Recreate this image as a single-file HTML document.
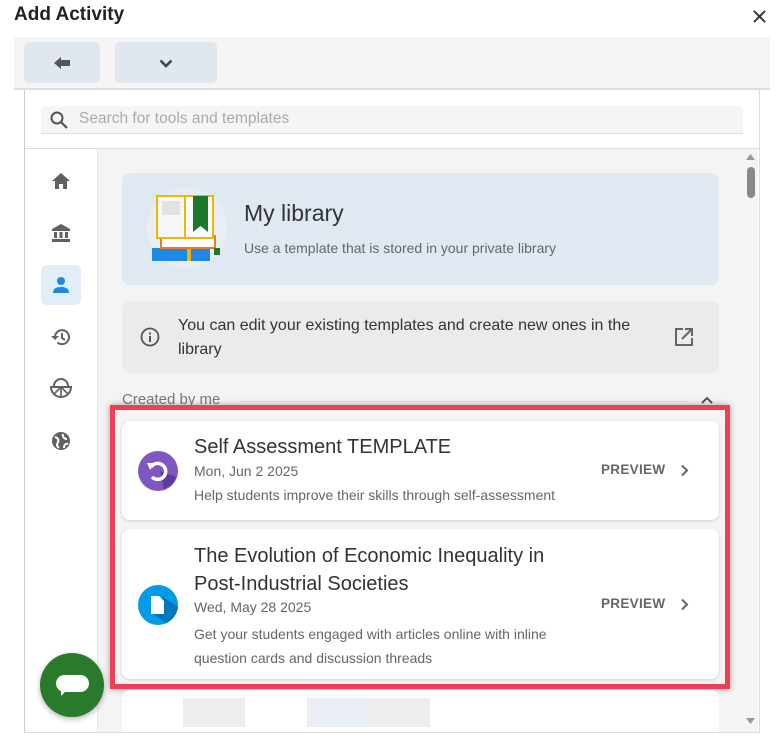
<!DOCTYPE html>
<html><head><style>
*{box-sizing:border-box;margin:0;padding:0}
body{width:778px;height:752px;background:#fff;font-family:"Liberation Sans",sans-serif;position:relative;overflow:hidden;color:#333}
.a{position:absolute}
.ic{position:absolute;fill:#616161}
</style></head><body>
<div class="a" style="left:14px;top:4px;font-size:19px;font-weight:bold;color:#222">Add Activity</div>
<svg class="a" style="left:753px;top:10px" width="13" height="13" viewBox="0 0 14 14"><path d="M1 1L13 13M13 1L1 13" stroke="#333" stroke-width="2"/></svg>
<div class="a" style="left:14px;top:37px;width:756px;height:53px;background:#f5f5f5;border-bottom:2px solid #ddd"></div>
<div class="a" style="left:24px;top:42px;width:76px;height:41px;background:#e1e7ef;border-radius:5px"></div>
<svg class="a" style="left:53px;top:56px" width="18" height="14" viewBox="0 0 18 14"><path d="M1 7L8 1V4H17V10H8V13Z" fill="#555"/></svg>
<div class="a" style="left:115px;top:42px;width:102px;height:41px;background:#e1e7ef;border-radius:5px"></div>
<svg class="a" style="left:159px;top:59px" width="14" height="9" viewBox="0 0 14 9"><path d="M1.5 1.5L7 7L12.5 1.5" stroke="#444" stroke-width="2.6" fill="none"/></svg>
<div class="a" style="left:24px;top:90px;width:736px;height:643px;border-left:1px solid #ccc;border-right:1px solid #ddd;border-bottom:1px solid #ddd;background:#fff"></div>
<div class="a" style="left:41px;top:106px;width:702px;height:28px;background:#f5f5f5;border-bottom:1px solid #ddd;border-radius:6px 6px 0 0"></div>
<svg class="a" style="left:49px;top:110px" width="20" height="20" viewBox="0 0 20 20"><circle cx="8" cy="8" r="5.5" stroke="#555" stroke-width="2" fill="none"/><path d="M12 12L18 18" stroke="#555" stroke-width="2.2"/></svg>
<div class="a" style="left:79px;top:110px;font-size:15.5px;color:#aaa">Search for tools and templates</div>
<div class="a" style="left:25px;top:148px;width:734px;height:1px;background:#ddd"></div>
<div class="a" style="left:97px;top:149px;width:661px;height:583px;background:#f4f4f4;border-left:1px solid #e6e6e6"></div>
<svg class="ic" style="left:51px;top:172px" width="20" height="18" viewBox="0 0 20 18"><path d="M10 1L1 9H4V17H8V12H12V17H16V9H19Z"/></svg>
<svg class="ic" style="left:51px;top:223px" width="20" height="20" viewBox="0 0 20 20"><path d="M10 1L1 6V8H19V6Z M3 9H6V15H3Z M8.5 9H11.5V15H8.5Z M14 9H17V15H14Z M1 16H19V19H1Z"/></svg>
<div class="a" style="left:41px;top:265px;width:40px;height:40px;background:#e1edf9;border-radius:6px"></div>
<svg class="a" style="left:52px;top:276px" width="18" height="18" viewBox="0 0 18 18"><circle cx="9" cy="5" r="4" fill="#1e88e5"/><path d="M1 17C1 12 5 11 9 11S17 12 17 17Z" fill="#1e88e5"/></svg>
<svg class="a" style="left:50px;top:326px" width="22" height="22" viewBox="0 0 22 22"><path d="M5 11A7 7 0 1 1 7.5 16.5" stroke="#616161" stroke-width="2" fill="none"/><path d="M1 10L5 14L9 10Z" fill="#616161"/><path d="M12 7V12L15 14" stroke="#616161" stroke-width="2" fill="none"/></svg>
<svg class="a" style="left:49px;top:376px" width="24" height="24" viewBox="0 0 24 24"><path d="M2 11H22A10 10 0 0 1 2 11Z M5 10A7 7 0 0 1 19 10" stroke="#616161" stroke-width="2" fill="none"/><path d="M12 11V21M12 11L5 18M12 11L19 18" stroke="#616161" stroke-width="1.6"/></svg>
<svg class="a" style="left:51px;top:431px" width="20" height="20" viewBox="0 0 20 20"><circle cx="10" cy="10" r="9" fill="#616161"/><path d="M4 6C7 7 8 9 7 11S5 14 8 17M12 3C11 6 14 8 16 8M13 17C13 14 15 12 17 13" stroke="#fff" stroke-width="2" fill="none"/></svg>
<div class="a" style="left:122px;top:173px;width:597px;height:112px;background:#e0e9f2;border-radius:8px"></div>
<svg class="a" style="left:147px;top:188px" width="80" height="80" viewBox="0 0 80 80"><circle cx="40" cy="40" r="40" fill="#e8eef4"/><rect x="5" y="60" width="58" height="13" fill="#1e88e5"/><rect x="40" y="60" width="4" height="13" fill="#f4b400"/><rect x="14" y="48" width="54" height="12" fill="#fff" stroke="#e87d1c" stroke-width="2"/><path d="M10 8H38V50H10Z" fill="#f7f7f7" stroke="#f4b400" stroke-width="2"/><path d="M38 8H66V50H38Z" fill="#fff" stroke="#f4b400" stroke-width="2"/><path d="M46 8H61V44L53.5 38L46 44Z" fill="#1b7a2a"/><rect x="15" y="13" width="18" height="14" fill="#e2e2e2"/><rect x="67" y="60" width="6" height="7" fill="#1b7a2a"/></svg>
<div class="a" style="left:244px;top:200px;font-size:23px;color:#333">My library</div>
<div class="a" style="left:244px;top:240px;font-size:14px;color:#666">Use a template that is stored in your private library</div>
<div class="a" style="left:122px;top:301px;width:597px;height:72px;background:#ebebeb;border-radius:8px"></div>
<svg class="a" style="left:140px;top:327px" width="20" height="20" viewBox="0 0 20 20"><circle cx="10" cy="10" r="8.5" stroke="#555" stroke-width="1.8" fill="none"/><rect x="9" y="9" width="2" height="6" fill="#555"/><rect x="9" y="5.5" width="2" height="2" fill="#555"/></svg>
<div class="a" style="left:178px;top:314px;width:470px;font-size:16px;line-height:24px;color:#333">You can edit your existing templates and create new ones in the library</div>
<svg class="a" style="left:674px;top:327px" width="20" height="20" viewBox="0 0 20 20"><path d="M9 2H2V18H18V11" stroke="#666" stroke-width="2" fill="none"/><path d="M8 12L17 3M11 2H18V9" stroke="#666" stroke-width="2" fill="none"/></svg>
<div class="a" style="left:122px;top:391px;font-size:15px;color:#777">Created by me</div>
<div class="a" style="left:240px;top:401px;width:448px;height:1px;background:#ddd"></div>
<svg class="a" style="left:701px;top:396px" width="12" height="8" viewBox="0 0 12 8"><path d="M1 7L6 2L11 7" stroke="#555" stroke-width="2" fill="none"/></svg>
<div class="a" style="left:122px;top:421px;width:597px;height:99px;background:#fff;border-radius:8px;box-shadow:0 1px 3px rgba(0,0,0,.15)"></div>
<svg class="a" style="left:138px;top:451px" width="40" height="40" viewBox="0 0 40 40"><circle cx="20" cy="20" r="20" fill="#7e57c2"/><path d="M22 20L38 26A20 20 0 0 1 26 38Z" fill="#5e3a9e"/><path d="M13 16A8 8 0 1 1 14 26" stroke="#fff" stroke-width="3.5" fill="none"/><path d="M9 12L17 12L12 19Z" fill="#fff"/></svg>
<div class="a" style="left:194px;top:436px;font-size:20px;color:#333">Self Assessment TEMPLATE</div>
<div class="a" style="left:194px;top:463px;font-size:14px;color:#666">Mon, Jun 2 2025</div>
<div class="a" style="left:194px;top:487px;font-size:14px;color:#666">Help students improve their skills through self-assessment</div>
<div class="a" style="left:601px;top:462px;font-size:13.5px;font-weight:bold;color:#666;letter-spacing:.3px">PREVIEW</div>
<svg class="a" style="left:680px;top:464px" width="9" height="13" viewBox="0 0 9 13"><path d="M2 1.5L7 6.5L2 11.5" stroke="#666" stroke-width="2" fill="none"/></svg>
<div class="a" style="left:122px;top:529px;width:597px;height:150px;background:#fff;border-radius:8px;box-shadow:0 1px 3px rgba(0,0,0,.15)"></div>
<svg class="a" style="left:138px;top:585px" width="40" height="40" viewBox="0 0 40 40"><circle cx="20" cy="20" r="20" fill="#039be5"/><path d="M25 12L40 22A20 20 0 0 1 28 38L14 28Z" fill="#0277bd"/><path d="M13 11H21L26 16V29H13Z" fill="#fff"/></svg>
<div class="a" style="left:194px;top:542px;width:390px;font-size:20px;line-height:28px;color:#333">The Evolution of Economic Inequality in Post-Industrial Societies</div>
<div class="a" style="left:194px;top:599px;font-size:14px;color:#666">Wed, May 28 2025</div>
<div class="a" style="left:194px;top:622px;width:380px;font-size:14px;line-height:24px;color:#666">Get your students engaged with articles online with inline question cards and discussion threads</div>
<div class="a" style="left:601px;top:596px;font-size:13.5px;font-weight:bold;color:#666;letter-spacing:.3px">PREVIEW</div>
<svg class="a" style="left:680px;top:598px" width="9" height="13" viewBox="0 0 9 13"><path d="M2 1.5L7 6.5L2 11.5" stroke="#666" stroke-width="2" fill="none"/></svg>
<div class="a" style="left:110px;top:405px;width:620px;height:284px;border:5px solid #ef3e55;box-shadow:0 0 6px rgba(0,0,0,.35)"></div>
<div class="a" style="left:122px;top:690px;width:597px;height:42px;background:#fff;border-radius:8px 8px 0 0"></div>
<div class="a" style="left:183px;top:698px;width:62px;height:29px;background:#efecec"></div>
<div class="a" style="left:307px;top:698px;width:62px;height:29px;background:#e9edf4"></div>
<div class="a" style="left:369px;top:698px;width:61px;height:29px;background:#eeeded"></div>
<svg class="a" style="left:746px;top:154px" width="9" height="6" viewBox="0 0 9 6"><path d="M0 6L4.5 0L9 6Z" fill="#999"/></svg>
<div class="a" style="left:747px;top:167px;width:8px;height:31px;background:#888;border-radius:4px"></div>
<svg class="a" style="left:746px;top:718px" width="9" height="6" viewBox="0 0 9 6"><path d="M0 0L4.5 6L9 0Z" fill="#999"/></svg>
<div class="a" style="left:40px;top:653px;width:64px;height:64px;background:#2a7a2c;border-radius:50%;box-shadow:0 2px 6px rgba(0,0,0,.3)"></div>
<div class="a" style="left:56px;top:675px;width:33px;height:17px;background:#fff;border-radius:9px"></div>
<svg class="a" style="left:61px;top:689px" width="7" height="7" viewBox="0 0 7 7"><path d="M0 0H7L0 7Z" fill="#fff"/></svg>
</body></html>
